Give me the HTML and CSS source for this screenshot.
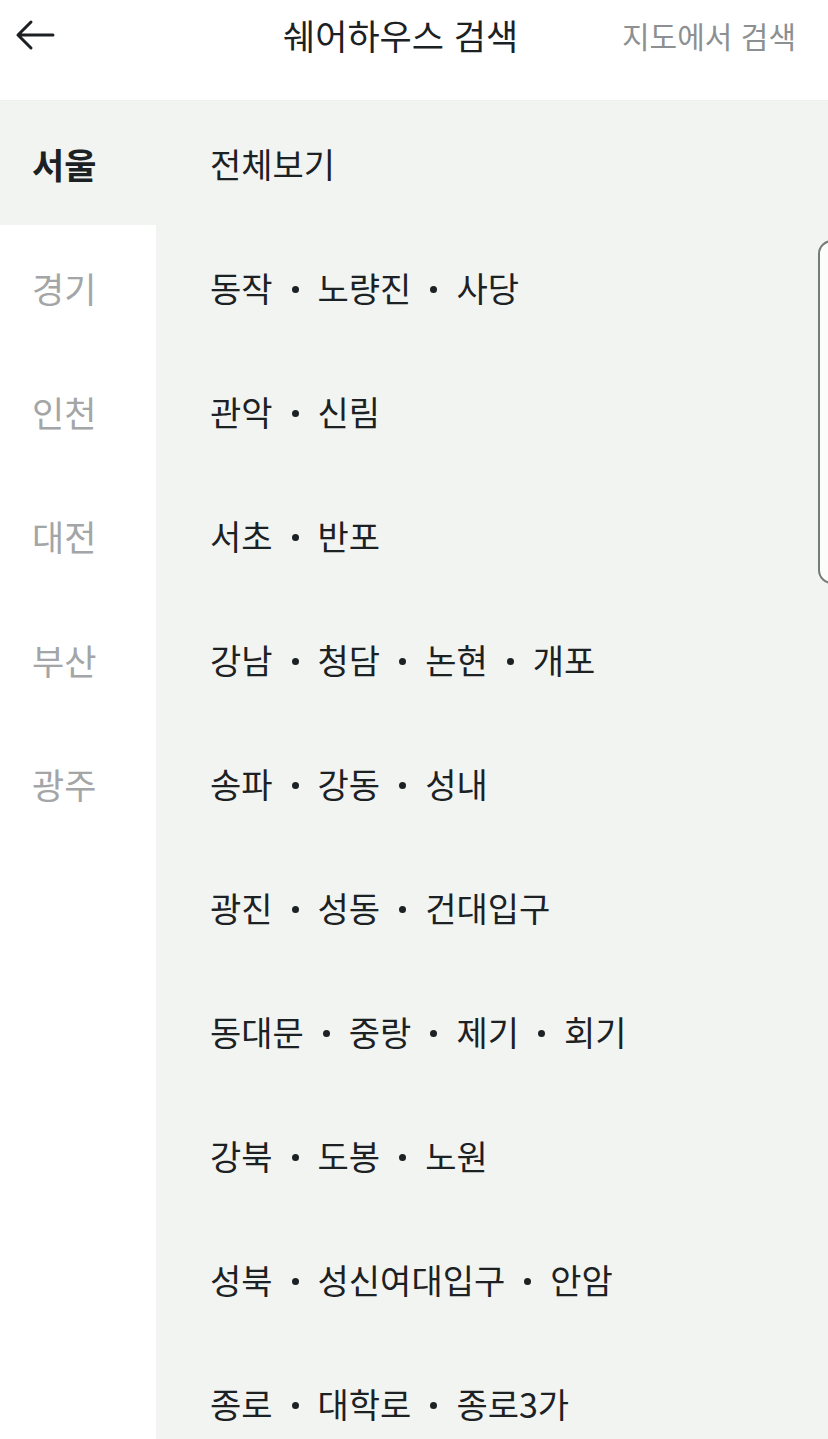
FILE: index.html
```html
<!DOCTYPE html>
<html lang="ko">
<head>
<meta charset="utf-8">
<title>쉐어하우스 검색</title>
<link rel="stylesheet" href="styles.css">
</head>
<body>
<div class="app">
  <header class="header">
    <button class="back" aria-label="뒤로">
      <svg width="40" height="32" viewBox="0 0 40 32"><path d="M38 16H3M16 3L3 16l13 13" fill="none" stroke="#1c2023" stroke-width="3" stroke-linecap="round" stroke-linejoin="round"/></svg>
    </button>
    <h1 class="title">쉐어하우스 검색</h1>
    <a class="map-link">지도에서 검색</a>
  </header>
  <main class="body">
    <nav class="regions">
      <div class="region active">서울</div>
      <div class="region">경기</div>
      <div class="region">인천</div>
      <div class="region">대전</div>
      <div class="region">부산</div>
      <div class="region">광주</div>
    </nav>
    <ul class="areas">
      <li class="area">전체보기</li>
      <li class="area">동작<span class="dot"></span>노량진<span class="dot"></span>사당</li>
      <li class="area">관악<span class="dot"></span>신림</li>
      <li class="area">서초<span class="dot"></span>반포</li>
      <li class="area">강남<span class="dot"></span>청담<span class="dot"></span>논현<span class="dot"></span>개포</li>
      <li class="area">송파<span class="dot"></span>강동<span class="dot"></span>성내</li>
      <li class="area">광진<span class="dot"></span>성동<span class="dot"></span>건대입구</li>
      <li class="area">동대문<span class="dot"></span>중랑<span class="dot"></span>제기<span class="dot"></span>회기</li>
      <li class="area">강북<span class="dot"></span>도봉<span class="dot"></span>노원</li>
      <li class="area">성북<span class="dot"></span>성신여대입구<span class="dot"></span>안암</li>
      <li class="area">종로<span class="dot"></span>대학로<span class="dot"></span>종로3가</li>
    </ul>
  </main>
  <div class="edge-handle"></div>
</div>
</body>
</html>
```
FILE: styles.css
```css
* { box-sizing: border-box; }
html, body { margin: 0; padding: 0; }
body {
  width: 828px;
  height: 1439px;
  overflow: hidden;
  background: #ffffff;
  font-family: "Noto Sans CJK KR", "Noto Sans", sans-serif;
  color: #1c2124;
}
.app { position: relative; width: 828px; height: 1439px; overflow: hidden; }
.header {
  height: 101px;
  display: flex;
  align-items: center;
  padding: 0 32px 0 15px;
  border-bottom: 1px solid #eef1ed;
  position: relative;
}
.back {
  border: 0; background: none; padding: 0; margin: -30px 0 0 0;
  width: 42px; height: 34px; display: flex; align-items: center;
}
.title {
  margin: -30px 0 0 226px;
  font-size: 35px;
  font-weight: 400;
  line-height: 44px;
  white-space: nowrap;
}
.map-link {
  margin-left: auto;
  margin-top: -30px;
  font-size: 30px;
  line-height: 40px;
  color: #8c9092;
}
.body {
  display: flex;
  height: 1338px;
  background: #f2f4f1;
}
.regions {
  width: 156px;
  background: #ffffff;
  display: flex;
  flex-direction: column;
}
.region {
  height: 124px;
  display: flex;
  align-items: center;
  padding-left: 32px;
  font-size: 35px;
  color: #a3a5a6;
}
.region.active {
  background: #f2f4f1;
  color: #1c2124;
  font-weight: 700;
}
.areas {
  list-style: none;
  margin: 0;
  padding: 0 0 0 54px;
  flex: 1;
}
.area {
  height: 124px;
  display: flex;
  align-items: center;
  font-size: 34px;
}
.dot {
  width: 7px;
  height: 7px;
  border-radius: 50%;
  background: #1c2124;
  margin: 4px 19px 0 19px;
  flex: none;
}
.edge-handle {
  position: absolute;
  left: 818px;
  top: 240px;
  width: 40px;
  height: 344px;
  border: 2px solid #777b76;
  border-radius: 14px;
  background: #fcfdfb;
}
```
